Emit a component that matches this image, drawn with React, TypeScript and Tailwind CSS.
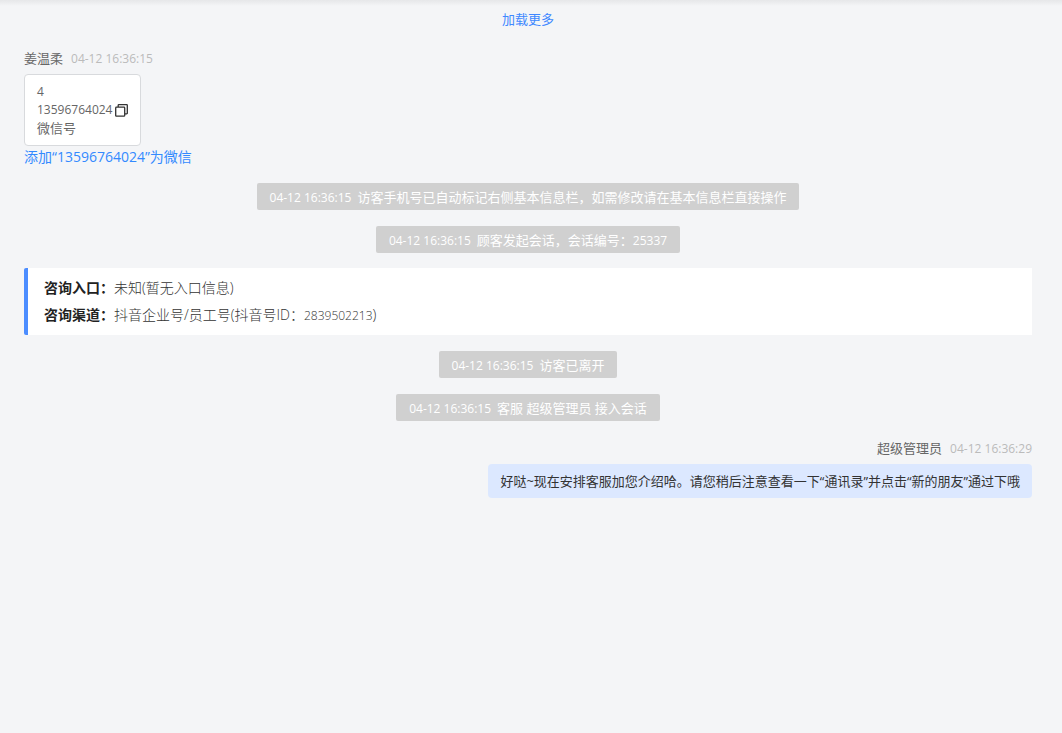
import type { ReactNode } from 'react'

const notices = {
  start: [
    { time: '04-12 16:36:15', text: '访客手机号已自动标记右侧基本信息栏，如需修改请在基本信息栏直接操作' },
    { time: '04-12 16:36:15', text: '顾客发起会话，会话编号：', code: '25337' },
  ],
  end: [
    { time: '04-12 16:36:15', text: '访客已离开' },
    { time: '04-12 16:36:15', text: '客服 超级管理员 接入会话' },
  ],
}

type NoticeProps = { time: string; text: string; code?: string }

function Notice({ time, text, code }: NoticeProps) {
  return (
    <p className="flex h-[27px] items-center gap-1.5 self-center rounded-xs bg-[#d0d0d0] px-[13px] pt-0.5 text-white">
      <time className="text-xs">{time}</time>
      <span>
        {text}
        {code && <span className="text-xs">{code}</span>}
      </span>
    </p>
  )
}

function Meta({ name, time }: { name: string; time: string }) {
  return (
    <div className="flex h-5 items-center gap-2">
      <span className="text-[#666666]">{name}</span>
      <time className="text-xs text-[#bbbbbb]">{time}</time>
    </div>
  )
}

function InfoRow({ label, children }: { label: string; children: ReactNode }) {
  return (
    <div className="flex">
      <dt className="font-bold text-[#222222]">{label}</dt>
      <dd className="font-light text-[#333333]">{children}</dd>
    </div>
  )
}

function CopyIcon() {
  return (
    <svg className="size-[13px]" viewBox="0 0 13 13" fill="none" stroke="#333333" strokeWidth="1.3" strokeLinejoin="round">
      <rect x="0.7" y="3.2" width="9" height="9" rx="0.8" />
      <path d="M3.2 3V1.3a.6.6 0 0 1 .6-.6h7.9a.6.6 0 0 1 .6.6v7.9a.6.6 0 0 1-.6.6H10" />
    </svg>
  )
}

export default function App() {
  return (
    <main className="min-h-screen bg-[#f4f5f7] font-['Open_Sans','Noto_Sans_CJK_SC',sans-serif] text-[13px]">
      <div className="h-1.5 bg-linear-to-b from-[#e6e7e9] to-[#f4f5f7]" />
      <div className="flex flex-col pr-[30px] pl-6">
        <button className="mt-1 h-5 self-center text-[#4088ff]">加载更多</button>

        <section className="mt-[19px] flex flex-col items-start">
          <Meta name="姜温柔" time="04-12 16:36:15" />
          <div className="mt-[5px] rounded-sm border border-[#d8dadd] bg-white px-3 py-2 leading-[18px] text-[#666666]">
            <p className="text-xs leading-[18px]">4</p>
            <p className="flex items-center gap-[3px] text-xs leading-[18px]">
              13596764024
              <button aria-label="复制">
                <CopyIcon />
              </button>
            </p>
            <p>微信号</p>
          </div>
          <a href="#" className="text-sm leading-[22px] text-[#338aff]">添加“13596764024”为微信</a>
        </section>

        <div className="mt-[15px] flex flex-col gap-4">
          {notices.start.map((item, index) => (
            <Notice key={index} {...item} />
          ))}
          <dl className="-mt-px rounded-l-xs border-l-4 border-[#4c8dff] bg-white px-4 pt-1.5 pb-[7px] text-sm leading-[27px]">
            <InfoRow label="咨询入口：">未知(暂无入口信息)</InfoRow>
            <InfoRow label="咨询渠道：">
              抖音企业号/员工号(抖音号ID：<span className="text-xs">2839502213</span>)
            </InfoRow>
          </dl>
          {notices.end.map((item, index) => (
            <Notice key={index} {...item} />
          ))}
        </div>

        <section className="mt-[18px] flex flex-col items-end">
          <Meta name="超级管理员" time="04-12 16:36:29" />
          <p className="mt-[5px] rounded-sm bg-[#dce8ff] px-3 py-2 leading-[18px] text-[#333333]">
            好哒~现在安排客服加您介绍哈。请您稍后注意查看一下“通讯录”并点击“新的朋友”通过下哦
          </p>
        </section>
      </div>
    </main>
  )
}
